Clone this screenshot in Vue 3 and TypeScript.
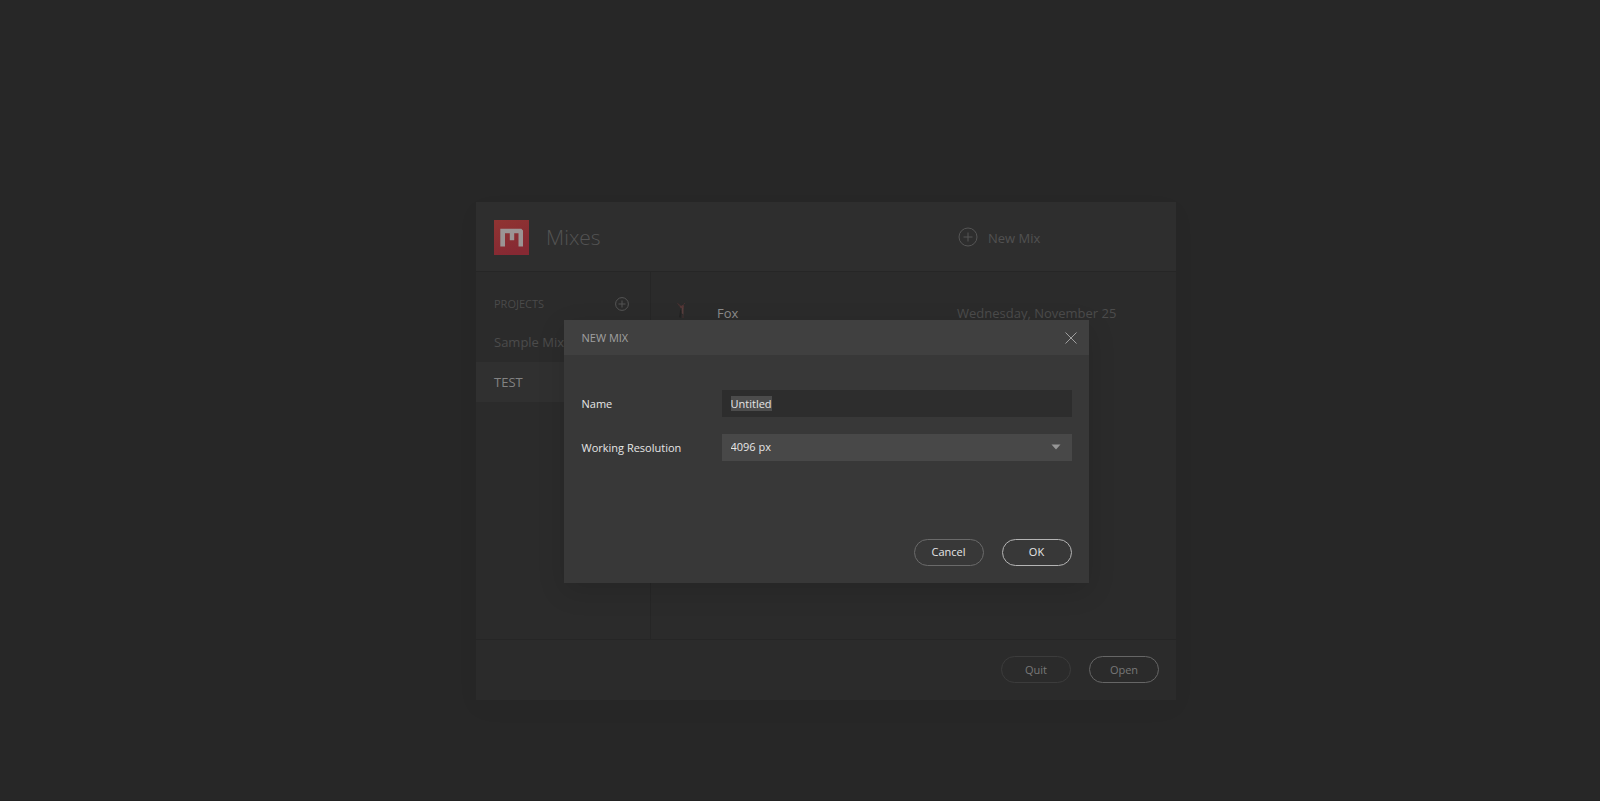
<script setup lang="ts">
import { onMounted, ref } from 'vue'

interface Mix {
  name: string
  date: string
}

const projects = ref<string[]>(['Sample Mixes', 'TEST'])
const activeProject = ref('TEST')
const mixes = ref<Mix[]>([{ name: 'Fox', date: 'Wednesday, November 25' }])
const mixName = ref('Untitled')
const resolution = ref('4096')
const resolutions = ['1024', '2048', '4096', '8192']
const nameField = ref<HTMLInputElement | null>(null)

onMounted(() => {
  nameField.value?.focus()
  nameField.value?.select()
})
</script>

<template>
  <div class="shell">
    <main class="window">
      <header class="top">
        <div class="brand">
          <svg class="logo" viewBox="0 0 35 35" aria-hidden="true">
            <defs>
              <linearGradient id="logo-fill" x1="0" y1="0" x2="0.4" y2="1">
                <stop offset="0" stop-color="#903432" />
                <stop offset="1" stop-color="#862933" />
              </linearGradient>
            </defs>
            <rect width="35" height="35" fill="url(#logo-fill)" />
            <path
              d="M6.300 8.700H27.300L29 10.400V26.500H24.500V13.300H20.200V20.200H15.800V13.300H11V26.500H6.300Z"
              fill="#9b9494"
            />
          </svg>
          <h1 class="title">Mixes</h1>
        </div>
        <button class="new-mix" type="button">
          <svg class="plus-large" viewBox="0 0 20 20" aria-hidden="true">
            <circle cx="10" cy="10" r="9" />
            <path d="M10 5.500V14.500M5.500 10H14.500" />
          </svg>
          <span>New Mix</span>
        </button>
      </header>

      <div class="content">
        <nav class="sidebar" aria-label="Projects">
          <div class="sidebar-head">
            <h2 class="sidebar-title">PROJECTS</h2>
            <button class="add-project" type="button" aria-label="Add project">
              <svg class="plus-small" viewBox="0 0 14 14" aria-hidden="true">
                <circle cx="7" cy="7" r="6.400" />
                <path d="M7 3.500V10.500M3.500 7H10.500" />
              </svg>
            </button>
          </div>
          <button
            v-for="project in projects"
            :key="project"
            type="button"
            class="project"
            :class="{ active: project === activeProject }"
            @click="activeProject = project"
          >
            {{ project }}
          </button>
        </nav>
        <section class="mixes">
          <div v-for="mix in mixes" :key="mix.name" class="mix">
            <svg class="thumb" viewBox="0 2 34 34" aria-hidden="true">
              <path d="M14 10L16 12L18.500 10.500L19 13L18 15L15 13.500Z" fill="#543636" />
              <path d="M17 13L18.500 14L18.500 21L16.500 19Z" fill="#593e3d" />
              <path d="M15.500 15L16.500 18L15.500 24L14 23Z" fill="#222" />
              <path d="M12.500 9L14.500 12M18.500 10.500L20 9M18 21V24" stroke="#463030" fill="none" />
            </svg>
            <span class="mix-name">{{ mix.name }}</span>
            <span class="mix-date">{{ mix.date }}</span>
          </div>
        </section>
      </div>

      <footer class="bottom">
        <button class="pill quit" type="button">Quit</button>
        <button class="pill open" type="button">Open</button>
      </footer>

      <div class="overlay">
        <form class="dialog" role="dialog" aria-labelledby="dialog-title" @submit.prevent>
          <header class="dialog-head">
            <h2 id="dialog-title" class="dialog-title">NEW MIX</h2>
            <button class="close" type="button" aria-label="Close">
              <svg class="cross" viewBox="0 0 12 12" aria-hidden="true">
                <path d="M0.500 0.500L11.500 11.500M11.500 0.500L0.500 11.500" />
              </svg>
            </button>
          </header>
          <div class="fields">
            <div class="field">
              <label for="mix-name">Name</label>
              <input id="mix-name" ref="nameField" v-model="mixName" type="text" />
            </div>
            <div class="field">
              <label for="mix-resolution">Working Resolution</label>
              <div class="select-box">
                <select id="mix-resolution" v-model="resolution">
                  <option v-for="size in resolutions" :key="size" :value="size">
                    {{ size }} px
                  </option>
                </select>
                <svg class="arrow" viewBox="0 0 10 6" aria-hidden="true">
                  <path d="M0.500 0.500H9.500L5 5.500Z" />
                </svg>
              </div>
            </div>
          </div>
          <div class="actions">
            <button class="pill cancel" type="button">Cancel</button>
            <button class="pill ok" type="submit">OK</button>
          </div>
        </form>
      </div>
    </main>
  </div>
</template>

<style>
body {
  background: #272727;
}
</style>

<style scoped>
.shell {
  box-sizing: border-box;
  min-height: 100vh;
  display: flex;
  align-items: center;
  justify-content: center;
  padding: 102px 0 0 52px;
  background: #272727;
  border-bottom: 1px solid #222;
  font-family: 'Open Sans', 'Noto Sans', sans-serif;
  font-size: 11px;
  line-height: 16px;
}

.shell *,
.shell *::before {
  box-sizing: border-box;
}

h1,
h2 {
  margin: 0;
  font-weight: 400;
}

button,
input,
select {
  margin: 0;
  padding: 0;
  border: 0;
  border-radius: 0;
  background: none;
  color: inherit;
  font: inherit;
  outline: none;
}

svg {
  display: block;
  flex: none;
}

.window {
  position: relative;
  width: 700px;
  max-width: 100%;
  display: flex;
  flex-direction: column;
  background: #2b2b2b;
  box-shadow: 0 8px 24px rgba(0, 0, 0, 0.03);
}

.top {
  display: grid;
  grid-template-columns: 482px 1fr;
  align-items: center;
  height: 70px;
  background: #2e2e2e;
  border-bottom: 1px solid #262626;
}

.brand {
  display: flex;
  align-items: center;
  gap: 17px;
  padding: 1px 0 0 18px;
}

.logo {
  width: 35px;
  height: 35px;
}

.title {
  font-size: 21px;
  line-height: 30px;
  font-weight: 300;
  color: #535353;
}

.new-mix {
  display: flex;
  align-items: center;
  justify-self: start;
  gap: 10px;
  font-size: 13px;
  line-height: 18px;
  color: #515151;
}

.new-mix span {
  padding-top: 2px;
}

.plus-large {
  width: 20px;
  height: 20px;
}

.plus-small {
  width: 14px;
  height: 14px;
}

.plus-large,
.plus-small {
  fill: none;
  stroke: #555;
}

.content {
  display: flex;
  min-height: 367px;
}

.sidebar {
  width: 175px;
  padding-top: 14px;
  border-right: 1px solid #262626;
}

.sidebar-head {
  display: flex;
  align-items: center;
  justify-content: space-between;
  height: 36px;
  padding: 0 21px 0 18px;
}

.sidebar-title {
  font-size: 11px;
  line-height: 16px;
  color: #4a4a4a;
}

.project {
  display: block;
  width: 100%;
  height: 40px;
  padding: 0 18px;
  font-size: 13px;
  line-height: 18px;
  text-align: left;
  color: #4c4c4c;
}

.project.active {
  background: #303030;
  color: #828282;
}

.mixes {
  flex: 1;
  padding-top: 19px;
}

.mix {
  display: grid;
  grid-template-columns: 66px 240px 1fr;
  align-items: center;
  height: 44px;
  font-size: 13px;
  line-height: 18px;
}

.thumb {
  width: 34px;
  height: 34px;
  margin-left: 14px;
}

.mix-name {
  color: #8b8b8b;
}

.mix-date {
  color: #4c4c4c;
}

.bottom {
  display: flex;
  align-items: center;
  justify-content: flex-end;
  gap: 18px;
  height: 61px;
  padding: 0 17px 1px 0;
  border-top: 1px solid #262626;
}

.pill {
  width: 70px;
  height: 27px;
  border: 1px solid;
  border-radius: 14px;
  text-align: center;
}

.quit {
  border-color: #3c3c3c;
  color: #787878;
}

.open {
  border-color: #666;
  color: #787878;
}

.overlay {
  position: absolute;
  inset: 0;
  display: flex;
  align-items: center;
  justify-content: center;
}

.dialog {
  width: 75%;
  background: #383838;
  box-shadow: 0 8px 26px rgba(0, 0, 0, 0.12);
  color: #e6e6e6;
}

.dialog-head {
  display: flex;
  align-items: center;
  justify-content: space-between;
  height: 35px;
  padding: 1px 12px 0 18px;
  background: #404040;
  color: #a0a0a0;
}

.dialog-title {
  font-size: 11px;
  line-height: 16px;
}

.cross {
  width: 12px;
  height: 12px;
  fill: none;
  stroke: #a0a0a0;
}

.fields {
  display: grid;
  gap: 17px;
  padding: 35px 17px 0 18px;
}

.field {
  display: grid;
  grid-template-columns: 140px 1fr;
  align-items: center;
}

.field label {
  padding-top: 2px;
}

.field input {
  width: 100%;
  height: 27px;
  padding: 0 9px;
  background: #2d2d2d;
}

.field input::selection {
  background: #4c4c4c;
  color: #e6e6e6;
}

.select-box {
  position: relative;
}

.select-box select {
  display: block;
  width: 100%;
  height: 27px;
  padding: 0 9px;
  appearance: none;
  background: #484848;
}

.arrow {
  position: absolute;
  top: 10px;
  right: 11px;
  width: 10px;
  height: 6px;
  fill: #969696;
  pointer-events: none;
}

.actions {
  display: flex;
  justify-content: flex-end;
  gap: 18px;
  padding: 78px 17px 17px;
}

.cancel {
  border-color: #6a6a6a;
}

.ok {
  border-color: #b4b4b4;
}
</style>
